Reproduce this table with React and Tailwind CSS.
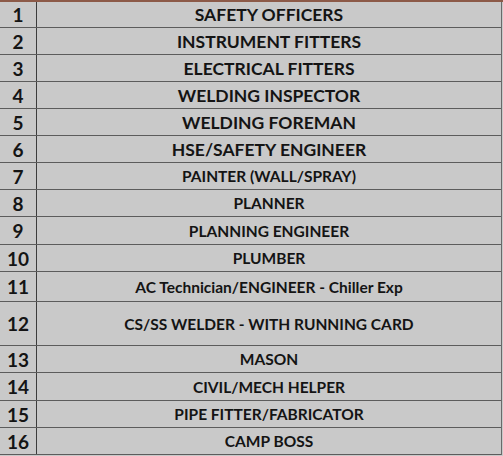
const ROWS = [
  { n: 1, label: 'SAFETY OFFICERS', h: 'h-[26px]', big: true },
  { n: 2, label: 'INSTRUMENT FITTERS', h: 'h-[27px]', big: true },
  { n: 3, label: 'ELECTRICAL FITTERS', h: 'h-[27px]', big: true },
  { n: 4, label: 'WELDING INSPECTOR', h: 'h-[27px]', big: true },
  { n: 5, label: 'WELDING FOREMAN', h: 'h-[27px]', big: true },
  { n: 6, label: 'HSE/SAFETY ENGINEER', h: 'h-[27px]', big: true },
  { n: 7, label: 'PAINTER (WALL/SPRAY)', h: 'h-[27px]' },
  { n: 8, label: 'PLANNER', h: 'h-[27px]' },
  { n: 9, label: 'PLANNING ENGINEER', h: 'h-[28px]' },
  { n: 10, label: 'PLUMBER', h: 'h-[27px]' },
  { n: 11, label: 'AC Technician/ENGINEER - Chiller Exp', h: 'h-[30px]' },
  { n: 12, label: 'CS/SS WELDER - WITH RUNNING CARD', h: 'h-[44px]' },
  { n: 13, label: 'MASON', h: 'h-[27px]' },
  { n: 14, label: 'CIVIL/MECH HELPER', h: 'h-[28px]' },
  { n: 15, label: 'PIPE FITTER/FABRICATOR', h: 'h-[27px]' },
  { n: 16, label: 'CAMP BOSS', h: 'h-[27px]' },
];

export default function App() {
  return (
    <div className="w-[503px] h-[456px] overflow-hidden bg-[#c9c9c9] font-['Lato',sans-serif] font-bold text-[#141414]">
      <div className="h-[2px] bg-[#8c5a48]" />
      <div className="border-r border-[#6a6a6a] w-[502px]">
        {ROWS.map((r) => (
          <div key={r.n} className={`${r.h} flex border-b border-[#5c5c5c]`}>
            <div className="w-[37px] shrink-0 border-r border-[#3c3c3c] flex items-center justify-center pt-[2px] text-[19px]">
              {r.n}
            </div>
            <div
              className={`flex-1 flex items-center justify-center pt-[2px] ${r.big ? 'text-[17.5px]' : 'text-[15.5px]'}`}
            >
              {r.label}
            </div>
          </div>
        ))}
      </div>
    </div>
  );
}
